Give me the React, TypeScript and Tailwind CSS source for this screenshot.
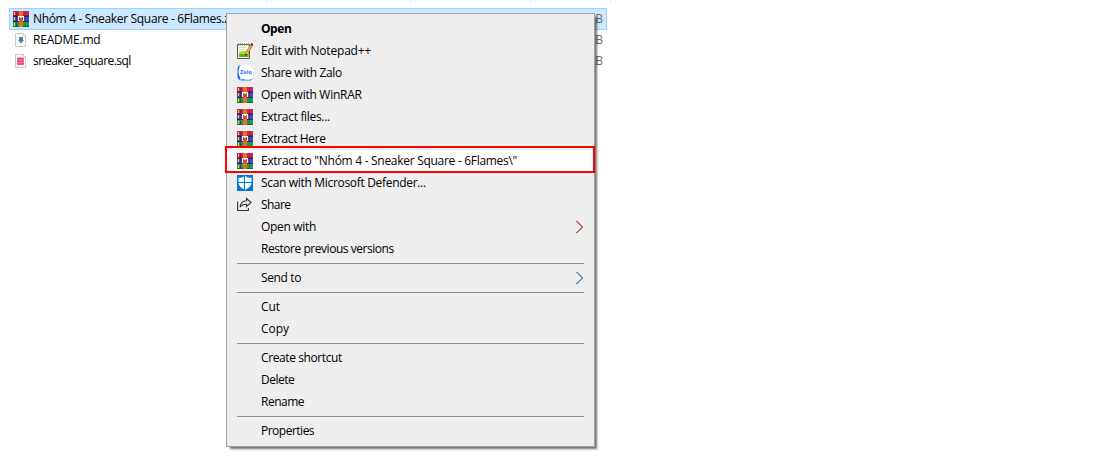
import type { ReactNode } from "react";

function WinRar() {
  return (
    <svg width="16" height="16" viewBox="0 0 16 16" shapeRendering="crispEdges" className="shrink-0">
      <path d="M0 0h16v5H0z" fill="#cf2355" />
      <path d="M0 4h16v1H0z" fill="#8a1c44" />
      <path d="M0 5h16v6H0z" fill="#4b49b4" />
      <path d="M0 5h16v1H0zM0 10h16v1H0z" fill="#2c2667" />
      <path d="M0 11h16v5H0z" fill="#1b9f4a" />
      <path d="M0 15h16v1H0z" fill="#0c6a30" />
      <path d="M1 1h1v3H1zM1 6h1v3H1zM1 12h1v3H1z" fill="#f5d13d" />
      <path d="M3 1h1v3H3zM3 6h1v4H3zM3 12h1v3H3z" fill="#4a2c5c" />
      <path d="M12 1h1v3h-1zM12 6h1v4h-1zM12 12h1v3h-1z" fill="#000" fillOpacity=".2" />
      <path d="M6 0h4v16H6z" fill="#e66f20" />
      <path d="M5 5h6v5H5z" fill="#c4503a" />
      <path d="M5 5h1v5H5zM10 5h1v5h-1zM6 5h4v1H6z" fill="#fff" />
      <path d="M7 6h2v1H7z" fill="#f6d9cf" />
    </svg>
  );
}

function Notepad() {
  return (
    <svg width="16" height="16" viewBox="0 0 16 16" className="shrink-0">
      <path d="M.5 1.5h12v14H.5z" fill="#f7f9ee" stroke="#555" />
      <path d="M2 8.500l9.500-1V14H2z" fill="#a4dc3a" />
      <path d="M2 11h9.500v3H2z" fill="#5cae16" />
      <path d="M2 4.500h7M2 6.500h6" stroke="#d3dbc9" />
      <path d="M1 1.500h11" stroke="#777" strokeDasharray="1 1" strokeWidth="2" />
      <path d="M14.200 2.500l-5 9" stroke="#6e5414" strokeWidth="2.800" />
      <path d="M14.200 2.500l-5 9" stroke="#f4bd28" strokeWidth="1.800" />
      <path d="M13.300 2.500L14.300 0 16 .8v2z" fill="#8c1520" />
      <path d="M8.200 10.800l1.800 .9-1.800 1.500z" fill="#333" />
    </svg>
  );
}

function Zalo() {
  return (
    <svg width="16" height="16" viewBox="0 0 16 16" className="shrink-0">
      <rect width="16" height="16" rx="5" fill="#fff" />
      <path d="M3.500 .2C1.200 .6 .4 2.200 .4 5v5c0 4 1.600 5.600 5.600 5.600h5c2.500 0 4-.5 4.700-1.800-2.400 1.300-7 1.400-10 .2-.9 .6-2 .7-3 .5 .7-.8 .9-1.500 .6-2.200C.9 9 .9 3.800 3.500 .2z" fill="#1268ee" />
      <text x="3" y="9" fontSize="5.6" fontWeight="700" fill="#2776f2" textLength="12" lengthAdjust="spacingAndGlyphs" className="font-['Open_Sans',sans-serif]">Zalo</text>
    </svg>
  );
}

function Defender() {
  return (
    <svg width="16" height="16" viewBox="0 0 16 16" className="shrink-0">
      <path d="M0 0h16v16H0z" fill="#0078d7" />
      <path d="M8 1C6.300 2.300 4 2.800 1.500 2.800V7c0 4 2.800 6.300 6.500 8 3.700-1.700 6.500-4 6.500-8V2.800C12 2.800 9.700 2.300 8 1z" fill="#fff" />
      <path d="M7.500 1v14M1 7.500h14" stroke="#0078d7" />
    </svg>
  );
}

function ShareIcon() {
  return (
    <svg width="16" height="16" viewBox="0 0 16 16" className="shrink-0" fill="none" stroke="#333" strokeWidth="1.1">
      <path d="M.6 4.500v9h10.800v-2.500" />
      <path d="M9.500 1.500l4.500 4-4.500 4V7.200C6.300 7.200 4.500 8 3 10.100 3.500 6.200 5.500 4 9.500 3.800z" />
    </svg>
  );
}

function FileIcon({ kind }: { kind: "md" | "sql" }) {
  return (
    <svg width="16" height="16" viewBox="0 0 16 16" className="shrink-0">
      <path d="M2.500 1.500h8l2 2v11h-10z" fill="#fafafa" stroke="#c9c9c9" />
      <path d="M10.500 1.500v2h2" fill="#fff" stroke="#c9c9c9" />
      {kind === "md" ? (
        <path d="M6 5h4v3h1l-3 3.500L5 8h1z" fill="#4387a8" />
      ) : (
        <>
          <rect x="4" y="4.500" width="7" height="7.500" rx="1" fill="#e8487c" />
          <path d="M4 7h7M4 9.500h7" stroke="#f6b3c9" strokeWidth=".6" />
        </>
      )}
    </svg>
  );
}

function Arrow({ first }: { first?: boolean }) {
  return (
    <svg width="9" height="14" viewBox="0 0 9 14" className="mr-[10px]" fill="none">
      <path d="M.8 .8L7 7l-6.200 6.200" stroke={first ? "#e0603a" : "#8fb6d8"} strokeWidth=".8" />
      <path d="M1.500 .800L7.700 7l-6.200 6.200" stroke={first ? "#8e2430" : "#0e5a9c"} />
    </svg>
  );
}

type Entry = { label: string; icon?: ReactNode; tracking: string; bold?: boolean; arrow?: ReactNode; marked?: boolean };

const groups: Entry[][] = [
  [
    { label: "Open", bold: true, tracking: "tracking-[-0.45px]" },
    { label: "Edit with Notepad++", icon: <Notepad />, tracking: "tracking-[-0.2px]" },
    { label: "Share with Zalo", icon: <Zalo />, tracking: "tracking-[-0.36px]" },
    { label: "Open with WinRAR", icon: <WinRar />, tracking: "tracking-[-0.26px]" },
    { label: "Extract files...", icon: <WinRar />, tracking: "tracking-[-0.32px]" },
    { label: "Extract Here", icon: <WinRar />, tracking: "tracking-[-0.39px]" },
    {
      label: 'Extract to "Nhóm 4 - Sneaker Square - 6Flames\\"',
      icon: <WinRar />,
      marked: true,
      tracking: "tracking-[-0.29px]",
    },
    { label: "Scan with Microsoft Defender...", icon: <Defender />, tracking: "tracking-[-0.32px]" },
    { label: "Share", icon: <ShareIcon />, tracking: "tracking-[-0.55px]" },
    { label: "Open with", arrow: <Arrow first />, tracking: "tracking-[-0.32px]" },
    { label: "Restore previous versions", tracking: "tracking-[-0.46px]" },
  ],
  [{ label: "Send to", arrow: <Arrow />, tracking: "tracking-[-0.36px]" }],
  [
    { label: "Cut", tracking: "tracking-[-0.1px]" },
    { label: "Copy", tracking: "tracking-[-0.05px]" },
  ],
  [
    { label: "Create shortcut", tracking: "tracking-[-0.4px]" },
    { label: "Delete", tracking: "tracking-[-0.5px]" },
    { label: "Rename", tracking: "tracking-[-0.5px]" },
  ],
  [{ label: "Properties", tracking: "tracking-[-0.5px]" }],
];

function MenuRow({ item }: { item: Entry }) {
  return (
    <div className={`relative flex h-[22px] items-center pl-[10px] ${item.marked ? "bg-white" : ""}`}>
      <div className="mr-2 flex w-4 shrink-0">{item.icon}</div>
      <span className={`flex-1 ${item.bold ? "font-bold" : ""} ${item.tracking}`}>{item.label}</span>
      {item.arrow}
      {item.marked && <div className="absolute -top-1 -left-[2px] h-[27px] w-[370px] border-2 border-[#f00]" />}
    </div>
  );
}

const files = [
  {
    name: "Nhóm 4 - Sneaker Square - 6Flames.zip",
    icon: <WinRar />,
    row: "h-[22px] border-[#99d1ff] bg-[#cce8ff]",
    tracking: "tracking-[-0.33px]",
  },
  {
    name: "README.md",
    icon: <FileIcon kind="md" />,
    row: "h-[20px] border-transparent",
    tracking: "tracking-[-0.22px]",
  },
  {
    name: "sneaker_square.sql",
    icon: <FileIcon kind="sql" />,
    row: "h-[22px] border-transparent",
    tracking: "tracking-[-0.55px]",
  },
];

export default function App() {
  return (
    <div className="relative h-[472px] w-[1110px] overflow-hidden bg-white font-['Open_Sans',sans-serif] text-[12px] leading-[16px] text-black">
      <div className="flex h-[2px] pl-[266px]">
        <div className="w-[144px] border-l border-[#e5e5e5]" />
        <div className="w-[120px] border-l border-[#e5e5e5]" />
        <div className="w-[81px] border-x border-[#e5e5e5]" />
      </div>
      <div className="mt-[6px] ml-[9px] w-[598px]">
        {files.map((f) => (
          <div key={f.name} className={`flex items-center border px-[3px] ${f.row}`}>
            {f.icon}
            <span className={`ml-1 flex-1 ${f.tracking}`}>{f.name}</span>
            <span className="text-[#6d6d6d]">KB</span>
          </div>
        ))}
      </div>
      <div className="absolute top-[13px] left-[226px] w-[369px] border border-[#a0a0a0] bg-[#eee] py-1 shadow-[3px_3px_2px_-1px_rgba(0,0,0,0.55)]">
        {groups.map((g, i) => (
          <div key={i}>
            {i > 0 && <div className="mx-[10px] mt-[3px] mb-[3px] h-px bg-[#919191]" />}
            {g.map((item) => (
              <MenuRow key={item.label} item={item} />
            ))}
          </div>
        ))}
      </div>
    </div>
  );
}
